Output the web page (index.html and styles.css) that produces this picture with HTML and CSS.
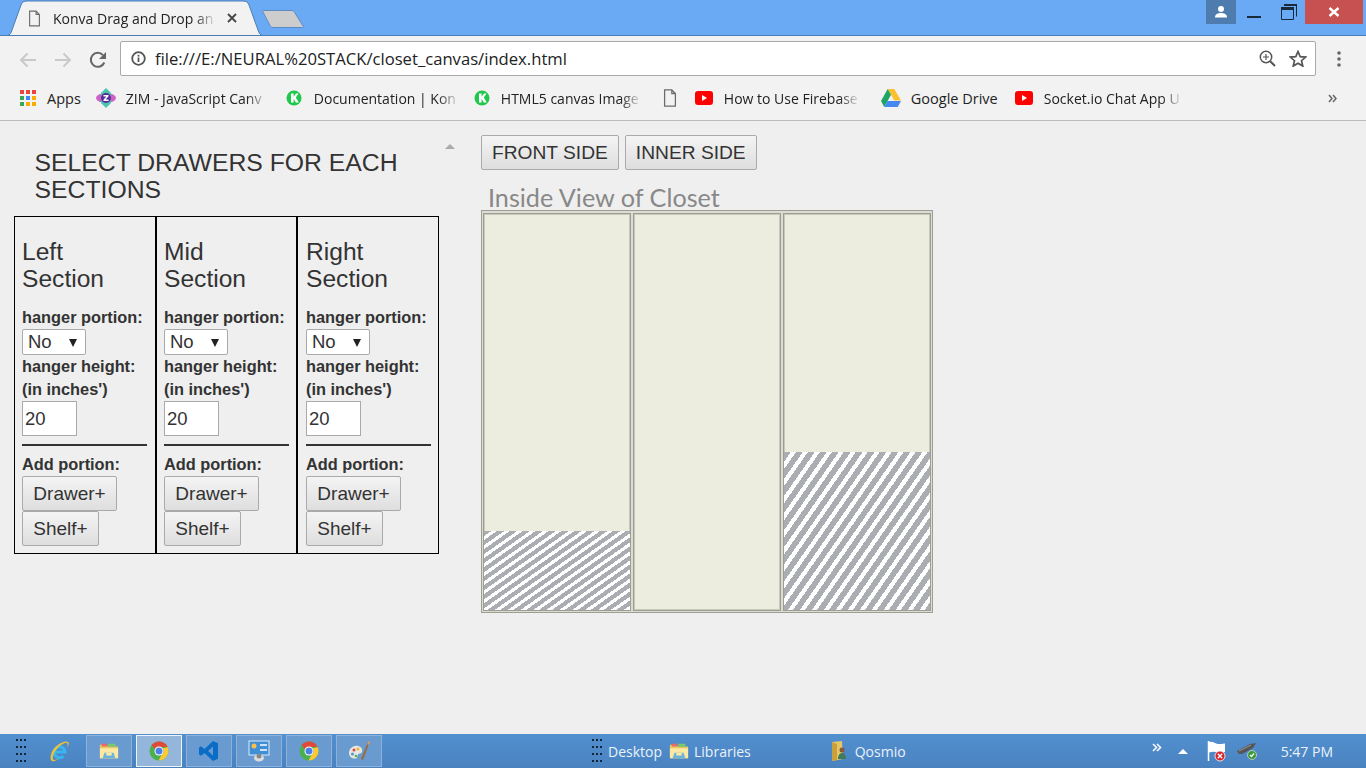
FILE: index.html
```html
<!DOCTYPE html>
<html lang="en">
<head>
    <meta charset="UTF-8">
    <title>Konva Drag and Drop an</title>
    <link rel="stylesheet" href="styles.css">
</head>
<body>

<svg class="defs" width="0" height="0">
    <symbol id="doc" viewBox="0 0 16 20">
        <path d="M2 1h8l4 4v14H2z M10 1v4h4" fill="#f2f2f2" stroke="#6b6b6b" stroke-width="1.4"/>
    </symbol>
    <symbol id="kon" viewBox="0 0 16 16">
        <circle cx="8" cy="8" r="7.5" fill="#1fc84c"/>
        <path d="M5 3.5h2.6v3.2l2.4-3.2h2.6L9.8 7.6l3 4.9H9.9L7.6 8.8v3.7H5z" fill="#fff"/>
    </symbol>
    <symbol id="yt" viewBox="0 0 18 14">
        <rect width="18" height="14" rx="3" fill="#f00"/>
        <path d="M7 4l5 3-5 3z" fill="#fff"/>
    </symbol>
    <symbol id="chrome" viewBox="0 0 20 20">
        <circle cx="10" cy="10" r="9.5" fill="#4caf50"/>
        <path d="M10 .5a9.5 9.5 0 0 1 8.6 5.5H10a4 4 0 0 0-3.8 2.8L2.700 4A9.500 9.500 0 0 1 10 .5z" fill="#e04a3b"/>
        <path d="M18.600 6A9.500 9.500 0 0 1 9.500 19.500l3.700-6.500A4 4 0 0 0 13.500 7.500z" fill="#fcc934"/>
        <circle cx="10" cy="10" r="4.500" fill="#fff"/>
        <circle cx="10" cy="10" r="3.500" fill="#4a80e8"/>
    </symbol>
    <symbol id="folder" viewBox="0 0 22 20">
        <path d="M1 3h7l2 2h11v13H1z" fill="#e9c860"/>
        <path d="M3 2h6v3H3z" fill="#e66"/>
        <path d="M10 2h8v3h-8z" fill="#7c6"/>
        <path d="M1 7h20v11H1z" fill="#fbe9a4"/>
        <path d="M6 12h10l2 6H4z" fill="#6db4dc"/>
        <path d="M8 12h6v3H8z" fill="#fbe9a4"/>
    </symbol>
    <symbol id="grip" viewBox="0 0 12 26">
        <path d="M1 1h2v2H1z M5 1h2v2H5z M9 1h2v2H9z M1 8h2v2H1z M5 8h2v2H5z M9 8h2v2H9z M1 15h2v2H1z M5 15h2v2H5z M9 15h2v2H9z M1 22h2v2H1z M5 22h2v2H5z M9 22h2v2H9z" fill="#16263a"/>
    </symbol>
</svg>

<div class="titlebar">
    <div class="tab">
        <svg class="tab-shape" width="256" height="36" viewBox="0 0 256 36">
            <path d="M0 35.500C3 35.500 4 33 5 30L14 5C15 2 17 1 20 1H236C239 1 241 2 242 5L251 30C252 33 253 35.500 256 35.500z" fill="#f2f2f2" stroke="#4a7cb5"/>
        </svg>
        <svg class="tab-icon" width="13" height="17"><use href="#doc"/></svg>
        <span class="tab-title">Konva Drag and Drop an</span>
        <svg class="tab-close" width="10" height="10" viewBox="0 0 10 10"><path d="M1 1l8 8M9 1L1 9" stroke="#444" stroke-width="1.800"/></svg>
    </div>
    <svg class="newtab" width="44" height="20" viewBox="0 0 44 20"><path d="M1.500 1.500H29C31 1.500 32 2 33 4L41 17C42 18 41.500 18.500 40 18.500H11C9.500 18.500 9 18 8 16.500L1 3C.5 2 .5 1.500 1.500 1.500z" fill="#cdcdcd" stroke="#5d8cc4"/></svg>
    <div class="window-controls">
        <div class="profile"><svg width="14" height="12" viewBox="0 0 14 12"><circle cx="7" cy="3" r="3" fill="#fff"/><path d="M1 11.500C1 8 4 7 7 7s6 1 6 4.500z" fill="#fff"/></svg></div>
        <div class="win-btn min"><svg width="14" height="2"><rect width="14" height="2" fill="#1a2a3a"/></svg></div>
        <div class="win-btn max"><svg width="16" height="16" viewBox="0 0 16 16"><path d="M3.500 .5h12v12M.5 3.500h12v12H.5z M.5 3.500v2h12" fill="none" stroke="#1a2a3a"/><rect x="3" y="0" width="13" height="2" fill="#1a2a3a"/><rect x="0" y="3" width="13" height="3" fill="#1a2a3a"/></svg></div>
        <div class="win-btn close"><svg width="12" height="10" viewBox="0 0 12 10"><path d="M1.500 1l9 8M10.500 1l-9 8" stroke="#fff" stroke-width="2.400"/></svg></div>
    </div>
</div>

<div class="toolbar">
    <svg class="nav back" width="18" height="16" viewBox="0 0 18 16"><path d="M17 8H2M8.500 1.500L2 8l6.500 6.500" fill="none" stroke="#c9c9c9" stroke-width="2"/></svg>
    <svg class="nav forward" width="18" height="16" viewBox="0 0 18 16"><path d="M1 8h15M9.500 1.500L16 8l-6.500 6.500" fill="none" stroke="#c9c9c9" stroke-width="2"/></svg>
    <svg class="nav reload" width="18" height="18" viewBox="0 0 18 18"><path d="M15.300 11.500A7 7 0 1 1 14 4.100" fill="none" stroke="#666" stroke-width="2"/><path d="M17 1v7h-7z" fill="#666"/></svg>
    <div class="omnibox">
        <svg width="15" height="15" viewBox="0 0 15 15"><circle cx="7.500" cy="7.500" r="6.300" fill="none" stroke="#555" stroke-width="1.800"/><rect x="6.600" y="6.500" width="1.800" height="4.500" fill="#555"/><rect x="6.600" y="3.800" width="1.800" height="1.800" fill="#555"/></svg>
        <span class="url">file:///E:/NEURAL%20STACK/closet_canvas/index.html</span>
        <svg class="zoom-icon" width="17" height="17" viewBox="0 0 17 17"><circle cx="7" cy="7" r="5.700" fill="none" stroke="#555" stroke-width="1.500"/><path d="M11 11l5 5" stroke="#555" stroke-width="2"/><path d="M4 7h6M7 4v6" stroke="#555" stroke-width="1.200"/></svg>
        <svg class="star" width="18" height="17" viewBox="0 0 18 17"><path d="M9 1.500l2.200 5.100 5.500.5-4.200 3.600 1.300 5.400L9 13.200l-4.800 2.900 1.300-5.400L1.300 7.100l5.500-.5z" fill="none" stroke="#555" stroke-width="1.700"/></svg>
    </div>
    <svg class="dots" width="4" height="16" viewBox="0 0 4 16"><circle cx="2" cy="2" r="1.800" fill="#666"/><circle cx="2" cy="8" r="1.800" fill="#666"/><circle cx="2" cy="14" r="1.800" fill="#666"/></svg>
</div>

<div class="bookmarks">
    <div class="bm bm-apps">
        <svg width="16" height="16" viewBox="0 0 16 16">
            <rect width="4" height="4" fill="#e8453c"/><rect x="6" width="4" height="4" fill="#e8453c"/><rect x="12" width="4" height="4" fill="#e8453c"/>
            <rect y="6" width="4" height="4" fill="#34a853"/><rect x="6" y="6" width="4" height="4" fill="#4285f4"/><rect x="12" y="6" width="4" height="4" fill="#f9ab00"/>
            <rect y="12" width="4" height="4" fill="#34a853"/><rect x="6" y="12" width="4" height="4" fill="#f9ab00"/><rect x="12" y="12" width="4" height="4" fill="#f9ab00"/>
        </svg>
        <span>Apps</span>
    </div>
    <div class="bm bm-zim">
        <svg width="20" height="20" viewBox="0 0 20 20"><ellipse cx="10" cy="10" rx="10" ry="5" fill="#d060c8"/><path d="M10 0l5 5v10l-5 5-5-5V5z" fill="#4cc4b0"/><circle cx="10" cy="10" r="5" fill="#5a2a9a"/><path d="M7.500 7h5v1.200L9.700 11.500h2.800V13h-5v-1.200l2.800-3.300H7.500z" fill="#fff"/></svg>
        <span class="fade w142">ZIM - JavaScript Canv</span>
    </div>
    <div class="bm bm-doc1">
        <svg width="16" height="16"><use href="#kon"/></svg>
        <span class="fade w146">Documentation | Kon</span>
    </div>
    <div class="bm bm-html5">
        <svg width="16" height="16"><use href="#kon"/></svg>
        <span class="fade w141">HTML5 canvas Image</span>
    </div>
    <div class="bm bm-page">
        <svg width="16" height="18"><use href="#doc"/></svg>
    </div>
    <div class="bm bm-fire">
        <svg width="18" height="14"><use href="#yt"/></svg>
        <span class="fade w136">How to Use Firebase</span>
    </div>
    <div class="bm bm-drive">
        <svg width="20" height="18" viewBox="0 0 20 18"><path d="M6.700 0h6.600l6.700 11.500h-6.700z" fill="#fbc02d"/><path d="M6.700 0l3.300 5.800L3.300 18 0 12z" fill="#1fa463"/><path d="M6.500 12H20l-3.300 6H3.300z" fill="#4688f1"/></svg>
        <span>Google Drive</span>
    </div>
    <div class="bm bm-socket">
        <svg width="18" height="14"><use href="#yt"/></svg>
        <span class="fade w139">Socket.io Chat App U</span>
    </div>
    <svg class="more" width="9" height="9" viewBox="0 0 9 9"><path d="M1 1l3 3.500L1 8M5 1l3 3.500L5 8" fill="none" stroke="#666" stroke-width="1.500"/></svg>
</div>

<div class="main">
    <div class="side-panel">
        <h2 class="panel-title">SELECT DRAWERS FOR EACH SECTIONS</h2>
        <span class="scroll-up"></span>
        <div class="sections">
            <div class="section">
                <h3>Left<br>Section</h3>
                <label>hanger portion:</label>
                <div class="select-wrap"><select><option>No</option></select></div>
                <label>hanger height:<br>(in inches')</label>
                <input type="text" value="20">
                <hr>
                <label>Add portion:</label>
                <button class="btn btn-drawer">Drawer+</button>
                <button class="btn btn-shelf">Shelf+</button>
            </div>
            <div class="section">
                <h3>Mid<br>Section</h3>
                <label>hanger portion:</label>
                <div class="select-wrap"><select><option>No</option></select></div>
                <label>hanger height:<br>(in inches')</label>
                <input type="text" value="20">
                <hr>
                <label>Add portion:</label>
                <button class="btn btn-drawer">Drawer+</button>
                <button class="btn btn-shelf">Shelf+</button>
            </div>
            <div class="section">
                <h3>Right<br>Section</h3>
                <label>hanger portion:</label>
                <div class="select-wrap"><select><option>No</option></select></div>
                <label>hanger height:<br>(in inches')</label>
                <input type="text" value="20">
                <hr>
                <label>Add portion:</label>
                <button class="btn btn-drawer">Drawer+</button>
                <button class="btn btn-shelf">Shelf+</button>
            </div>
        </div>
    </div>

    <div class="view-panel">
        <div class="view-buttons">
            <button class="btn btn-side">FRONT SIDE</button>
            <button class="btn btn-side">INNER SIDE</button>
        </div>
        <div class="view-title">Inside View of Closet</div>
        <div class="closet">
            <div class="column"><div class="hatch hatch-low"></div></div>
            <div class="column"></div>
            <div class="column"><div class="hatch hatch-high"></div></div>
        </div>
    </div>
</div>

<div class="taskbar">
    <svg class="tb-grip" width="12" height="26"><use href="#grip"/></svg>
    <svg class="tb-ie" width="20" height="22" viewBox="0 0 20 22"><path d="M5 12h10a5.500 5.500 0 1 0-1.500 4" fill="none" stroke="#38b6f2" stroke-width="3"/><path d="M18 2C15 0 7 4 3 10 0 15 0 20 2 21c2 .8 5-1 7-2.500-2 1-4.500 2-5.500 1.200C2 18 3 14 6 10 10 5 15 2 17 3c1 .7 1 2.500 0 5 1.500-2.500 2.500-5 1-6z" fill="#f2c230"/></svg>
    <div class="tb-apps">
        <div class="tb-btn"><svg width="20" height="20"><use href="#folder"/></svg></div>
        <div class="tb-btn active"><svg width="20" height="20"><use href="#chrome"/></svg></div>
        <div class="tb-btn"><svg width="20" height="22" viewBox="0 0 20 22"><path d="M14 1l5 2.300v15.400L14 21 5.500 13 2 15.800 0 14.500V7.500l2-1.300L5.500 9zM14 6.500L9 11l5 4.500z" fill="#0a6cc4" fill-rule="evenodd"/></svg></div>
        <div class="tb-btn"><svg width="22" height="22" viewBox="0 0 22 22"><rect x="1" y="1" width="20" height="14" fill="#3f8fd6" stroke="#dcebf7"/><path d="M12 5h7M12 10h7" stroke="#fff" stroke-width="1.500"/><circle cx="6" cy="6" r="2.500" fill="#f6c04a"/><ellipse cx="11" cy="18" rx="5" ry="3.500" fill="#ddd"/><circle cx="11" cy="16" r="2.500" fill="#888"/></svg></div>
        <div class="tb-btn"><svg width="20" height="20"><use href="#chrome"/></svg></div>
        <div class="tb-btn"><svg width="22" height="22" viewBox="0 0 22 22"><path d="M1 13c0-5 5-8 9-7 3 .6 5 3 4 6-.5 2-3 1-4 2.500-1 2 0 4-3 4-3.500 0-6-2-6-5.500z" fill="#e8e6e0"/><circle cx="6" cy="10" r="1.500" fill="#d94a3a"/><circle cx="10" cy="9" r="1.500" fill="#e8b830"/><circle cx="4.500" cy="14" r="1.500" fill="#4a9ad9"/><circle cx="8" cy="16" r="1.300" fill="#5ab04a"/><path d="M13 19L20 2l1.500.7L15 20z" fill="#9a6a3a"/><path d="M19 4l2-3 1 1-1.500 3z" fill="#e6a050"/></svg></div>
    </div>
    <svg class="tb-grip tb-grip-desktop" width="12" height="26"><use href="#grip"/></svg>
    <span class="tb-text tb-desktop">Desktop</span>
    <svg class="tb-lib-icon" width="20" height="20"><use href="#folder"/></svg>
    <span class="tb-text tb-libraries">Libraries</span>
    <svg class="tb-user-icon" width="17" height="22" viewBox="0 0 17 22"><path d="M1 2l10-1 1 18-11 2z" fill="#e6c566"/><path d="M1 2l5 2v16l-5 1z" fill="#c9a13c"/><circle cx="11" cy="10" r="2.500" fill="#8a5a3a"/><path d="M7 19c0-4 2-6 4-6s4 2 4 6z" fill="#3f7a5a"/></svg>
    <span class="tb-text tb-qosmio">Qosmio</span>
    <svg class="tb-more" width="10" height="9" viewBox="0 0 10 9"><path d="M1 1l3.500 3.500L1 8M5 1l3.500 3.500L5 8" fill="none" stroke="#fff" stroke-width="1.500"/></svg>
    <span class="tb-up"></span>
    <svg class="tb-flag" width="19" height="22" viewBox="0 0 19 22"><path d="M1.500 1v20" stroke="#fff" stroke-width="1.500"/><path d="M2 2c4-1 6 2 9 2 2 0 4 0 7-.5V12c-3 1-5 1-7 .5-3-1-6-1-9 0z" fill="#fff"/><circle cx="13" cy="16" r="5" fill="#d8232a" stroke="#fff" stroke-width=".8"/><path d="M10.800 13.800l4.400 4.400M15.200 13.800l-4.400 4.400" stroke="#fff" stroke-width="1.300"/></svg>
    <svg class="tb-usb" width="21" height="20" viewBox="0 0 21 20"><path d="M0 10l13-7 6-1-3 5-11 6H2z" fill="#555"/><path d="M2 10l12-6" stroke="#999"/><circle cx="15" cy="14" r="4.500" fill="#3c9a3c" stroke="#ddd" stroke-width=".7"/><path d="M13 14l1.500 1.500L17 12.500" stroke="#fff" fill="none" stroke-width="1.200"/></svg>
    <span class="tb-text tb-time">5:47 PM</span>
</div>

</body>
</html>
```

FILE: styles.css
```css
html, body {
    margin: 0;
    padding: 0;
}
body {
    height: 768px;
    overflow: hidden;
    display: flex;
    flex-direction: column;
    font-family: "Liberation Sans", Arial, sans-serif;
    color: #333;
    background-color: #efefef;
}
.defs {
    position: absolute;
}
svg {
    display: block;
    flex: none;
}

/* browser title bar */
.titlebar {
    height: 35px;
    border-bottom: 1px solid #4a7cb5;
    background-color: #6aaaf5;
    display: flex;
    align-items: flex-start;
}
.tab {
    position: relative;
    width: 256px;
    height: 36px;
    margin-left: 7px;
    display: flex;
    align-items: center;
    font-family: "Open Sans", sans-serif;
    font-size: 14px;
    color: #222;
}
.tab-shape {
    position: absolute;
    left: 0;
    top: 0;
}
.tab-icon {
    position: relative;
    margin-left: 21px;
}
.tab-title {
    position: relative;
    width: 164px;
    margin-left: 12px;
    white-space: nowrap;
    overflow: hidden;
    -webkit-mask-image: linear-gradient(90deg, #000 86%, transparent);
    mask-image: linear-gradient(90deg, #000 86%, transparent);
}
.tab-close {
    position: relative;
    margin-left: 10px;
}
.newtab {
    margin: 9px 0 0 -1px;
}
.window-controls {
    margin-left: auto;
    margin-right: 3px;
    display: flex;
}
.profile {
    width: 30px;
    height: 24px;
    background-color: #4f7cae;
    display: flex;
    align-items: center;
    justify-content: center;
}
.win-btn {
    height: 24px;
    display: flex;
}
.min {
    width: 14px;
    margin-left: 11px;
    align-items: flex-end;
    padding-bottom: 6px;
    height: 18px;
}
.max {
    width: 16px;
    margin-left: 20px;
    padding-top: 4px;
    height: 20px;
}
.close {
    width: 58px;
    margin-left: 8px;
    background-color: #c75050;
    align-items: center;
    justify-content: center;
}

/* toolbar */
.toolbar {
    height: 48px;
    background-color: #f2f2f2;
    display: flex;
    align-items: center;
}
.nav.back {
    margin-left: 19px;
}
.nav.forward {
    margin-left: 17px;
}
.nav.reload {
    margin-left: 17px;
}
.omnibox {
    width: 1184px;
    height: 33px;
    margin-left: 13px;
    margin-top: -3px;
    background-color: #fff;
    border: 1px solid #aaa;
    border-radius: 2px;
    display: flex;
    align-items: center;
    padding-left: 10px;
}
.url {
    margin-left: 9px;
    font-family: "Open Sans", sans-serif;
    font-size: 16.650px;
    color: #222;
    white-space: nowrap;
}
.zoom-icon {
    margin-left: auto;
}
.star {
    margin-left: 13px;
    margin-right: 8px;
}
.dots {
    margin-left: 21px;
    margin-top: -3px;
}

/* bookmarks bar */
.bookmarks {
    height: 37px;
    box-sizing: border-box;
    padding: 0 0 8px 20px;
    border-bottom: 1px solid #bbb;
    background-color: #f2f2f2;
    display: flex;
    align-items: center;
    font-family: "Open Sans", sans-serif;
    font-size: 14.500px;
    color: #222;
    white-space: nowrap;
}
.bm {
    display: flex;
    align-items: center;
}
.fade {
    font-size: 14px;
    overflow: hidden;
    -webkit-mask-image: linear-gradient(90deg, #000 85%, transparent);
    mask-image: linear-gradient(90deg, #000 85%, transparent);
}
.w142 { width: 142px; }
.w146 { width: 146px; }
.w141 { width: 141px; }
.w136 { width: 136px; }
.w139 { width: 139px; }
.bm-apps span { margin-left: 11px; }
.bm-zim { margin-left: 15px; }
.bm-zim span { margin-left: 10px; }
.bm-doc1 { margin-left: 18px; }
.bm-doc1 span { margin-left: 12px; }
.bm-html5 { margin-left: 14px; }
.bm-html5 span { margin-left: 11px; }
.bm-page { margin-left: 20px; }
.bm-fire { margin-left: 17px; }
.bm-fire span { margin-left: 11px; }
.bm-drive { margin-left: 21px; }
.bm-drive span { margin-left: 10px; }
.bm-socket { margin-left: 17px; }
.bm-socket span { margin-left: 11px; }
.more {
    margin-left: auto;
    margin-right: 29px;
}

/* page */
.main {
    flex: 1;
    display: flex;
    background-color: #efefef;
}
.side-panel {
    position: relative;
    width: 467px;
    padding-left: 14px;
    box-sizing: border-box;
}
.panel-title {
    margin: 28px 0 13px 20.500px;
    width: 400px;
    font-size: 24.750px;
    line-height: 27px;
    font-weight: normal;
}
.scroll-up {
    position: absolute;
    left: 445px;
    top: 23px;
    border-left: 5px solid transparent;
    border-right: 5px solid transparent;
    border-bottom: 5px solid #aaa;
}
.sections {
    display: flex;
    width: 425px;
    border: 1px solid #000;
    box-sizing: border-box;
}
.section {
    width: 141px;
    box-sizing: border-box;
    padding: 21px 7px 7px 7px;
    display: flex;
    flex-direction: column;
    align-items: flex-start;
    border-left: 2px solid #000;
}
.section:first-child {
    width: 140px;
    border-left: 0;
}
.section:last-child {
    width: 142px;
    padding-left: 8px;
}
.section h3 {
    margin: 0 0 14px 0;
    font-size: 24.600px;
    line-height: 27px;
    font-weight: normal;
}
.section label {
    font-size: 16.350px;
    font-weight: bold;
    line-height: 23px;
}
.select-wrap {
    position: relative;
}
.select-wrap::after {
    content: "";
    position: absolute;
    right: 9px;
    top: 10px;
    border-left: 4px solid transparent;
    border-right: 4px solid transparent;
    border-top: 8px solid #222;
}
.select-wrap select {
    display: block;
    width: 64px;
    height: 26px;
    padding: 0 0 2px 5px;
    border: 1px solid #aaa;
    border-radius: 2px;
    background-color: #fff;
    color: #333;
    font-family: inherit;
    font-size: 18.500px;
    -webkit-appearance: none;
    appearance: none;
}
.section input {
    width: 55px;
    height: 35px;
    padding: 0 2px;
    box-sizing: border-box;
    border: 1px solid #aaa;
    background-color: #fff;
    color: #333;
    font-family: inherit;
    font-size: 18.500px;
}
.section hr {
    width: 125px;
    height: 2px;
    margin: 8px 0 7px 0;
    border: 0;
    background-color: #333;
}
.btn {
    height: 35px;
    padding: 0;
    border: 1px solid #aaa;
    border-radius: 2px;
    background: linear-gradient(#f4f4f4, #dedede);
    color: #333;
    font-family: inherit;
    font-size: 19px;
}
.btn-drawer { width: 95px; }
.btn-shelf { width: 77px; }

.view-panel {
    padding-top: 14px;
    padding-left: 14px;
}
.view-buttons {
    display: flex;
    gap: 6px;
}
.btn-side {
    font-size: 19.200px;
    padding: 0 10px;
}
.view-title {
    margin: 13px 0 0 7px;
    height: 27px;
    font-family: Lato, sans-serif;
    font-size: 25.200px;
    line-height: 28px;
    color: #888;
}
.closet {
    width: 452px;
    height: 403px;
    box-sizing: border-box;
    border: 1px solid #9c9e92;
    padding: 2px 1px 1px 1px;
    background-color: #dcdcd4;
    display: flex;
    gap: 2px;
}
.column {
    flex: 1;
    box-sizing: border-box;
    border: 1px solid #9c9e92;
    box-shadow: inset 0 0 0 1px #c8c9ba;
    background-color: #ecedde;
    display: flex;
    flex-direction: column;
    justify-content: flex-end;
}
.hatch-low {
    height: 79px;
    background: repeating-linear-gradient(145deg, #aaadb2 0, #aaadb2 4.200px, #fff 4.200px, #fff 7.400px);
}
.hatch-high {
    height: 158px;
    background: repeating-linear-gradient(125deg, #aaadb2 0, #aaadb2 5.600px, #fff 5.600px, #fff 9.800px);
}

/* windows taskbar */
.taskbar {
    height: 34px;
    background: linear-gradient(#5290cf, #4a82c0);
    display: flex;
    align-items: center;
    color: #eaf2fb;
}
.tb-grip {
    margin-left: 15px;
}
.tb-ie {
    margin-left: 23px;
}
.tb-apps {
    display: flex;
    gap: 4px;
    margin-left: 16px;
}
.tb-btn {
    width: 46px;
    height: 32px;
    box-sizing: border-box;
    border: 1px solid #8fb1d8;
    background-color: #6a9bd0;
    display: flex;
    align-items: center;
    justify-content: center;
}
.tb-btn.active {
    border-color: #eef4fb;
    background-color: #93b6da;
}
.tb-text {
    font-family: "Open Sans", sans-serif;
    font-size: 14px;
}
.tb-grip-desktop {
    margin-left: 209px;
}
.tb-desktop {
    margin-left: 5px;
}
.tb-lib-icon {
    margin-left: 7px;
}
.tb-libraries {
    margin-left: 5px;
}
.tb-user-icon {
    margin-left: 80px;
}
.tb-qosmio {
    margin-left: 7px;
}
.tb-more {
    margin: -8px 0 0 246px;
}
.tb-up {
    margin-left: 16px;
    border-left: 5px solid transparent;
    border-right: 5px solid transparent;
    border-bottom: 5px solid #fff;
}
.tb-flag {
    margin-left: 19px;
}
.tb-usb {
    margin-left: 11px;
}
.tb-time {
    margin-left: 23px;
}
```
